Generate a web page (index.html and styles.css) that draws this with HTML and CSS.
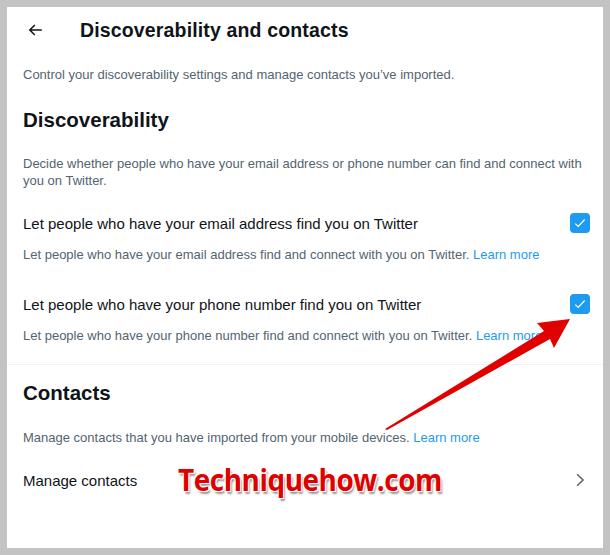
FILE: index.html
```html
<!DOCTYPE html>
<html lang="en">
<head>
    <meta charset="UTF-8">
    <meta name="viewport" content="width=device-width, initial-scale=1.0">
    <title>Discoverability and contacts</title>
    <link rel="stylesheet" href="styles.css">
</head>
<body>

<div class="panel">
    <div class="header">
        <svg class="back" width="18" height="18" viewBox="0 0 24 24"><path d="M7.414 13l5.043 5.04-1.414 1.42L3.586 12l7.457-7.46 1.414 1.42L7.414 11H21v2H7.414z" fill="#0f1419"/></svg>
        <h1>Discoverability and contacts</h1>
    </div>

    <p class="intro">Control your discoverability settings and manage contacts you’ve imported.</p>

    <h2>Discoverability</h2>
    <p class="desc">Decide whether people who have your email address or phone number can find and connect with you on Twitter.</p>

    <div class="options">
        <div class="option">
            <div class="option-row">
                <span>Let people who have your email address find you on Twitter</span>
                <span class="check"><svg width="14" height="14" viewBox="0 0 24 24"><path d="M4 13l5 5L20 6" fill="none" stroke="#fff" stroke-width="2"/></svg></span>
            </div>
            <p class="sub">Let people who have your email address find and connect with you on Twitter. <a href="#">Learn more</a></p>
        </div>

        <div class="option">
            <div class="option-row">
                <span>Let people who have your phone number find you on Twitter</span>
                <span class="check"><svg width="14" height="14" viewBox="0 0 24 24"><path d="M4 13l5 5L20 6" fill="none" stroke="#fff" stroke-width="2"/></svg></span>
            </div>
            <p class="sub">Let people who have your phone number find and connect with you on Twitter. <a href="#">Learn more</a></p>
        </div>
    </div>

    <div class="divider"></div>

    <h2 class="contacts">Contacts</h2>
    <p class="desc">Manage contacts that you have imported from your mobile devices. <a href="#">Learn more</a></p>

    <div class="link-row">
        <span>Manage contacts</span>
        <svg width="18" height="18" viewBox="0 0 24 24"><path d="M14.586 12L7.543 4.96l1.414-1.42L17.414 12l-8.457 8.46-1.414-1.42L14.586 12z" fill="#536471"/></svg>
    </div>

    <svg class="pointer" width="200" height="125" viewBox="0 0 200 125">
        <polygon points="7,117 166,19 159,11 192,7 176,36 172,27 9,118" fill="#e00000"/>
    </svg>
    <div class="watermark">Techniquehow.com</div>
</div>

</body>
</html>
```

FILE: styles.css
```css
body {
    margin: 0;
    background-color: #c3c3c3;
    font-family: "Liberation Sans", Arial, sans-serif;
    color: #0f1419;
}
.panel {
    position: relative;
    width: 596px;
    height: 541px;
    margin: 7px;
    background-color: #fff;
    box-sizing: border-box;
}
.header {
    display: flex;
    align-items: center;
    height: 46px;
    padding: 0 16px;
}
.back {
    margin-left: 3px;
}
h1 {
    margin: 0 0 0 36px;
    font-size: 19.5px;
    letter-spacing: 0.15px;
    font-weight: bold;
}
.intro, .desc, .sub {
    margin: 0;
    padding: 0 16px;
    font-size: 13px;
    line-height: 17px;
    color: #536471;
}
.intro {
    padding-top: 13px;
}
h2 {
    margin: 0;
    padding: 25px 16px 0;
    font-size: 20.5px;
    line-height: 24px;
}
h2.contacts {
    padding-top: 16px;
}
.desc {
    padding-top: 23px;
}
h2.contacts + .desc {
    padding-top: 24px;
}
.options {
    padding-top: 24px;
}
.option + .option {
    padding-top: 31px;
}
.option-row {
    display: flex;
    justify-content: space-between;
    align-items: center;
    padding: 0 13px 0 16px;
    font-size: 15px;
}
.check {
    display: flex;
    align-items: center;
    justify-content: center;
    width: 20px;
    height: 20px;
    border-radius: 4px;
    background-color: #1d9bf0;
}
.sub {
    padding-top: 13px;
}
a {
    color: #1d9bf0;
    text-decoration: none;
}
.divider {
    margin-top: 20px;
    border-top: 1px solid #eff3f4;
}
.link-row {
    display: flex;
    justify-content: space-between;
    align-items: center;
    padding: 25px 14px 0 16px;
    font-size: 15px;
}
.pointer {
    position: absolute;
    left: 371px;
    top: 305px;
}
.watermark {
    position: absolute;
    left: 171px;
    top: 451px;
    font-family: "Open Sans", sans-serif;
    font-weight: bold;
    font-size: 31px;
    letter-spacing: -0.5px;
    transform: scaleX(0.9);
    transform-origin: left top;
    color: #e00000;
    text-shadow: -1px -1px 0 #fff, 1px -1px 0 #fff, -1px 1px 0 #fff, 1px 1px 0 #fff, 2px 3px 2px #999;
}
```
